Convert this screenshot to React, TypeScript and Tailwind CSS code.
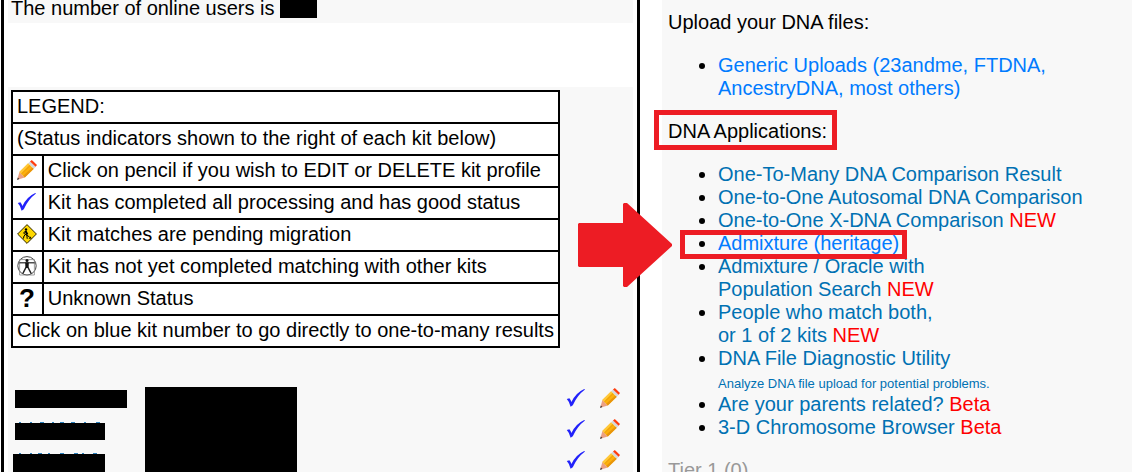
import type { ReactNode } from "react";

function Pencil() {
  return (
    <svg viewBox="0 0 20 20" className="block h-5 w-5" role="img" aria-label="Edit">
      <path d="M0.2 19.8 2.4 12 7.8 17.4Z" fill="#eba083" />
      <path d="M0 20 0.9 17.4 2.4 19Z" fill="#333" />
      <path d="M2.4 12 11.2 3.2 16.8 8.8 7.8 17.4Z" fill="#fdb10b" />
      <path d="M2.4 12 11.2 3.2 12.6 4.6 4 13.6Z" fill="#ffc93a" />
      <path d="M6.2 15.8 15.4 7.4 16.8 8.8 7.8 17.4Z" fill="#e8950c" />
      <path d="M4.4 14 13.4 5.4" stroke="#dc9410" strokeWidth="0.6" />
      <path d="M11.2 3.2 13.2 1.2 18.8 6.8 16.8 8.8Z" fill="#d5d8dc" />
      <path d="M13 1.6 14.8 0 20 5 18.6 6.8Z" fill="#ff3c0c" />
    </svg>
  );
}

function Check() {
  return (
    <svg viewBox="0 0 20 20" className="block h-5 w-5" role="img" aria-label="Good status">
      <path
        d="M0.8 11 3.4 10.2Q4.8 11.8 5.4 14 9.8 4.8 18.2 1L19 1.6Q11.4 7.2 6.8 17.2L4.6 18.8Q3.4 13.6 0.8 11Z"
        fill="#2222fa"
      />
    </svg>
  );
}

function Pending() {
  return (
    <svg viewBox="0 0 20 20" className="block h-5 w-5" role="img" aria-label="Pending">
      <path d="M10 0.6 19.4 10 10 19.4 0.6 10Z" fill="#ffd800" stroke="#2b2400" strokeWidth="1" strokeLinejoin="round" />
      <circle cx="9" cy="5.4" r="1.2" />
      <path d="M8.4 6.8 10.4 10.4" fill="none" stroke="#000" strokeWidth="2" />
      <path
        d="M8 7.4 6.6 9.2 12.6 13M8.6 10.4 7 12 6.4 14.6M9.8 10.4 10.2 14.8"
        fill="none"
        stroke="#000"
        strokeWidth="1"
      />
      <path d="M11.6 14.8 13.2 12.4 14.8 14.6Z" />
    </svg>
  );
}

function Vitruvian() {
  return (
    <svg viewBox="0 0 20 20" className="block h-5 w-5" role="img" aria-label="Not yet matched">
      <circle cx="10" cy="9.8" r="9.2" fill="none" stroke="#444" strokeWidth="1" />
      <path d="M2.6 3.6H17.4V19H2.6Z" fill="none" stroke="#888" strokeWidth="0.8" />
      <circle cx="10" cy="4.4" r="1.5" fill="#111" />
      <path d="M2.4 6.8H17.6" stroke="#222" strokeWidth="1.2" />
      <path d="M8.2 6.4H11.8L11.6 12H8.4Z" fill="#111" />
      <path d="M9 11.4 5.8 17.6M11 11.4 14.2 17.6" stroke="#222" strokeWidth="1.4" />
    </svg>
  );
}

function Unknown() {
  return (
    <span className="block h-5 w-5 text-center text-[26px] leading-5 font-bold">?</span>
  );
}

const legend: { icon: ReactNode; text: string }[] = [
  { icon: <Pencil />, text: "Click on pencil if you wish to EDIT or DELETE kit profile" },
  { icon: <Check />, text: "Kit has completed all processing and has good status" },
  { icon: <Pending />, text: "Kit matches are pending migration" },
  { icon: <Vitruvian />, text: "Kit has not yet completed matching with other kits" },
  { icon: <Unknown />, text: "Unknown Status" },
];

const cell = "h-8 border-2 border-black px-1 pt-0 pb-0.5 text-left font-normal whitespace-nowrap";

function Legend() {
  return (
    <table className="border-collapse bg-white">
      <tbody>
        <tr>
          <th colSpan={2} className={cell}>LEGEND:</th>
        </tr>
        <tr>
          <td colSpan={2} className={cell}>(Status indicators shown to the right of each kit below)</td>
        </tr>
        {legend.map((row) => (
          <tr key={row.text}>
            <td className={cell}>{row.icon}</td>
            <td className={cell}>{row.text}</td>
          </tr>
        ))}
        <tr>
          <td colSpan={2} className={cell}>Click on blue kit number to go directly to one-to-many results</td>
        </tr>
      </tbody>
    </table>
  );
}

function Peek({ marks }: { marks: number[] }) {
  return (
    <svg viewBox="0 0 90 1" className="block h-px w-[90px]" aria-hidden="true">
      {marks.map((x, i) => (
        <rect key={x} x={x} y="0" width={i > 1 && i % 3 !== 0 ? 4 : 2} height="1" fill="#2a7fbb" />
      ))}
    </svg>
  );
}

function Kits() {
  return (
    <div className="mt-9 flex justify-between pr-2.5">
      <div className="flex">
        <div className="w-[134px] pl-1">
          <div className="h-[31px] pt-1.5">
            <div className="h-[18px] w-28 bg-black" />
          </div>
          <div className="h-[31px] pt-[7px]">
            <Peek marks={[4, 15, 25, 37, 45, 56, 69, 81]} />
            <div className="h-[17px] w-[90px] bg-black" />
          </div>
          <div className="h-[31px] pt-[7px]">
            <Peek marks={[4, 15, 23, 33, 45, 59, 67, 78]} />
            <div className="-ml-0.5 h-[18px] w-[92px] bg-black" />
          </div>
        </div>
        <div className="mt-[3px] h-[100px] w-[152px] bg-black" />
      </div>
      <div>
        {[0, 1, 2].map((k) => (
          <div key={k} className="flex h-[31px] items-start gap-3.5 pt-1">
            <Check />
            <a href="#edit"><Pencil /></a>
          </div>
        ))}
      </div>
    </div>
  );
}

function Tag({ children }: { children: ReactNode }) {
  return <span className="text-[#ff0000]">{children}</span>;
}

function Arrow() {
  return (
    <svg viewBox="0 0 94 84" className="absolute top-1/2 right-full mr-2 h-[84px] w-[94px] -translate-y-1/2" aria-hidden="true">
      <path
        d="M1 20H45V1L46 0H49L94 41V43L49 84H46L45 83V64H1L0 63V21Z"
        fill="#ed1c24"
      />
    </svg>
  );
}

export default function App() {
  return (
    <div
      className="grid h-screen grid-cols-[640fr_492fr] overflow-hidden bg-white text-[20px] leading-[23px] text-black"
      style={{ fontFamily: '"Liberation Sans", Arial, sans-serif' }}
    >
      <main className="ml-px min-w-0 border-x-[3px] border-black px-1">
        <div className="-mt-[3px] flex bg-[#f8f8f8] pb-[3px] pl-[3px]">
          <span className="whitespace-pre">The number of online users is </span>
          <span className="h-[21px] w-[37px] bg-black" />
        </div>
        <div className="h-16" />
        <div className="h-full bg-[#f8f8f8] p-[3px]">
          <Legend />
          <Kits />
        </div>
      </main>

      <aside className="ml-[22px] min-w-0 bg-[#f8f8f8] pt-[11px] pl-1.5 text-[#0071b3]">
        <h2 className="text-black">Upload your DNA files:</h2>
        <ul className="my-5 list-disc pl-[50px] marker:text-black">
          <li>
            <a href="#upload" className="text-[#007bff]">
              Generic Uploads (23andme, FTDNA,
              <br />
              AncestryDNA, most others)
            </a>
          </li>
        </ul>
        <h2 className="relative w-fit text-black">
          DNA Applications:
          <span className="absolute -top-2.5 -right-2.5 -bottom-[7px] -left-3.5 border-5 border-[#ed1c24]" />
        </h2>
        <ul className="my-5 list-disc pl-[50px] marker:text-black">
          <li><a href="#one-to-many">One-To-Many DNA Comparison Result</a></li>
          <li><a href="#autosomal">One-to-One Autosomal DNA Comparison</a></li>
          <li><a href="#x-dna">One-to-One X-DNA Comparison</a> <Tag>NEW</Tag></li>
          <li className="relative w-fit">
            <a href="#admixture" className="text-[#007bff]">Admixture (heritage)</a>
            <span className="absolute -top-0.5 -right-2 -bottom-1 -left-[38px] z-10 border-5 border-[#ed1c24]">
              <span className="absolute inset-y-0 -left-[5px]">
                <Arrow />
              </span>
            </span>
          </li>
          <li>
            <a href="#oracle">
              Admixture / Oracle with
              <br />
              Population Search
            </a>{" "}
            <Tag>NEW</Tag>
          </li>
          <li>
            <a href="#both">
              People who match both,
              <br />
              or 1 of 2 kits
            </a>{" "}
            <Tag>NEW</Tag>
          </li>
          <li>
            <a href="#diagnostic">DNA File Diagnostic Utility</a>
            <p className="pt-1 text-[13px] leading-[19px]">Analyze DNA file upload for potential problems.</p>
          </li>
          <li><a href="#parents">Are your parents related?</a> <Tag>Beta</Tag></li>
          <li><a href="#browser">3-D Chromosome Browser</a> <Tag>Beta</Tag></li>
        </ul>
        <h2 className="text-[#999]">Tier 1 (0)</h2>
      </aside>
    </div>
  );
}
